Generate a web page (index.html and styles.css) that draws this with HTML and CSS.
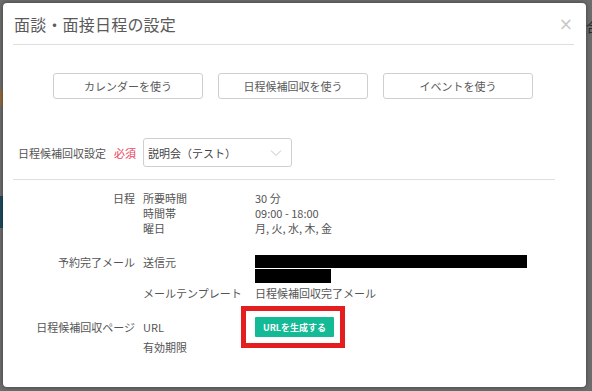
FILE: index.html
```html
<!DOCTYPE html>
<html lang="ja">
  <head>
    <meta charset="UTF-8" />
    <meta name="viewport" content="width=device-width, initial-scale=1.0" />
    <title>面談・面接日程の設定</title>
    <link rel="stylesheet" href="styles.css">
  </head>
  <body>
    <div class="page">
      <div class="page-side">
        <span class="strip strip-orange"></span>
        <span class="strip strip-blue"></span>
      </div>
      <div class="page-right">合</div>
    </div>

    <div class="modal">
      <div class="modal-head">
        <h2>面談・面接日程の設定</h2>
        <span class="close">&times;</span>
      </div>

      <div class="modal-body">
        <div class="choices">
          <button type="button">カレンダーを使う</button>
          <button type="button">日程候補回収を使う</button>
          <button type="button">イベントを使う</button>
        </div>

        <div class="setting">
          <label for="setting-select">日程候補回収設定<em>必須</em></label>
          <div class="select">
            <span>説明会（テスト）</span>
            <svg width="12" height="8" viewBox="0 0 12 8" fill="none" stroke="#c4c4c4" stroke-width="1">
              <polyline points="1 1.5 6 6.5 11 1.5" />
            </svg>
          </div>
        </div>

        <hr />

        <div class="sect sect-date">
          <div class="sect-label">日程</div>
          <dl class="pairs">
            <dt>所要時間</dt><dd>30 分</dd>
            <dt>時間帯</dt><dd>09:00 - 18:00</dd>
            <dt>曜日</dt><dd>月, 火, 水, 木, 金</dd>
          </dl>
        </div>

        <div class="sect sect-mail">
          <div class="sect-label">予約完了メール</div>
          <dl class="pairs">
            <dt>送信元</dt>
            <dd class="redacted">
              <span class="bar bar-long"></span>
              <span class="bar bar-short"></span>
            </dd>
            <dt>メールテンプレート</dt><dd>日程候補回収完了メール</dd>
          </dl>
        </div>

        <div class="sect sect-page">
          <div class="sect-label">日程候補回収ページ</div>
          <dl class="pairs">
            <dt class="url-label">URL</dt>
            <dd>
              <span class="mark-wrap">
                <button type="button" class="generate">URLを生成する</button>
                <span class="mark"></span>
              </span>
            </dd>
            <dt>有効期限</dt><dd></dd>
          </dl>
        </div>
      </div>
    </div>
  </body>
</html>
```

FILE: styles.css
```css
* {
  margin: 0;
  padding: 0;
  box-sizing: border-box;
}

body {
  font-family: "Noto Sans CJK JP", "Noto Sans", sans-serif;
  background-color: #6c6c6c;
  width: 592px;
  height: 391px;
  overflow: hidden;
  position: relative;
  color: #555;
}

/* page behind the overlay */
.page {
  display: flex;
  justify-content: space-between;
  height: 100%;
}

.page-side {
  display: flex;
  flex-direction: column;
  width: 3px;
  padding-top: 90px;
  gap: 90px;
}

.strip {
  display: block;
  width: 3px;
}
.strip-orange {
  height: 16px;
  background-color: #8f6a3f;
}
.strip-blue {
  height: 32px;
  background-color: #1d4a5e;
}

.page-right {
  padding-top: 16px;
  font-size: 14px;
  color: #2a2a2a;
  width: 6px;
  overflow: hidden;
  white-space: nowrap;
}

/* modal */
.modal {
  position: absolute;
  top: 3px;
  left: 3px;
  width: 583px;
  height: 384px;
  background-color: #fff;
  border-radius: 4px;
  box-shadow: 0 0 4px rgba(0, 0, 0, 0.45);
}

.modal-head {
  display: flex;
  align-items: center;
  justify-content: space-between;
  height: 42px;
  margin: 0 12px 0 10px;
  padding: 0 1px 0 1px;
  border-bottom: 1px solid #dedede;
}

.modal-head h2 {
  font-size: 16px;
  font-weight: 400;
  color: #5a5a5a;
  letter-spacing: 0.2px;
}

.close {
  font-family: "DejaVu Sans", sans-serif;
  font-size: 17px;
  color: #c8c8c8;
  line-height: 1;
  margin-top: 1px;
}

.modal-body {
  padding: 28px 10px 0 10px;
}

.choices {
  display: flex;
  justify-content: center;
  gap: 15px;
  padding-right: 3px;
}

.choices button {
  width: 150px;
  height: 26px;
  background-color: #fff;
  border: 1px solid #cfcfcf;
  border-radius: 3px;
  font-family: inherit;
  font-size: 11px;
  color: #5a5a5a;
}

.setting {
  display: flex;
  align-items: center;
  gap: 7px;
  margin-top: 39px;
}

.setting label {
  width: 123px;
  text-align: right;
  font-size: 11px;
  color: #555;
}

.setting em {
  font-style: normal;
  color: #e8435a;
  margin-left: 8px;
}

.select {
  display: flex;
  align-items: center;
  justify-content: space-between;
  width: 149px;
  height: 29px;
  padding: 0 9px 0 4px;
  border: 1px solid #cfcfcf;
  border-radius: 3px;
  font-size: 11px;
  color: #444;
}

hr {
  border: none;
  border-top: 1px solid #dedede;
  width: 542px;
  margin-top: 12px;
}

.sect {
  display: flex;
  gap: 8px;
  font-size: 11px;
  line-height: 15px;
}

.sect-label {
  width: 122px;
  text-align: right;
}

.pairs {
  display: grid;
  grid-template-columns: 104px 1fr;
  column-gap: 8px;
  align-items: center;
}

.sect-date {
  margin-top: 11px;
}

.sect-mail {
  margin-top: 19px;
}
.sect-mail .pairs {
  row-gap: 3px;
  align-items: start;
}

.redacted {
  display: flex;
  flex-direction: column;
  align-items: flex-start;
  gap: 1px;
}

.bar {
  display: block;
  background-color: #000;
}
.bar-long {
  width: 272px;
  height: 13px;
}
.bar-short {
  width: 76px;
  height: 14px;
}

.sect-page {
  margin-top: 16px;
}
.sect-page .sect-label {
  padding-top: 3px;
}
.sect-page .pairs {
  row-gap: 3px;
}

.mark-wrap {
  position: relative;
  display: inline-block;
  vertical-align: top;
}

.generate {
  display: block;
  width: 79px;
  height: 20px;
  background-color: #14b995;
  border: none;
  border-radius: 1px;
  font-family: inherit;
  font-size: 9px;
  font-weight: 700;
  color: #fff;
}

/* red annotation box drawn over the button */
.mark {
  position: absolute;
  top: -11px;
  left: -14px;
  right: -11px;
  bottom: -11px;
  border: 5px solid #e41e1e;
}
```
